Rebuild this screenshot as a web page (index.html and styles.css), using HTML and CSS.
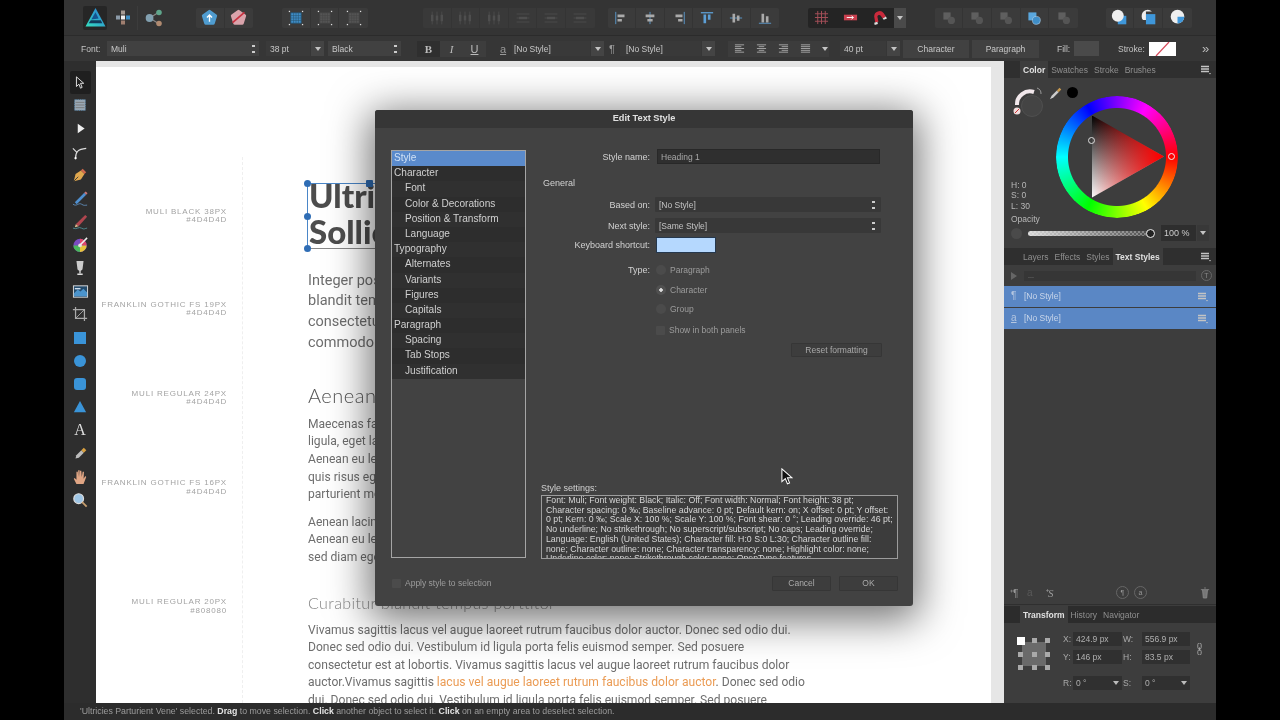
FILE: index.html
```html
<!DOCTYPE html>
<html lang="en">
<head>
<meta charset="utf-8">
<title>Edit Text Style</title>
<link rel="stylesheet" href="styles.css">
</head>
<body>
<svg class="defs" width="0" height="0">
  <defs><linearGradient id="lg" x1="0" y1="1" x2="1" y2="0"><stop offset="0" stop-color="#35e0c0"/><stop offset="1" stop-color="#2a76d6"/></linearGradient></defs>
  <symbol id="penta" viewBox="0 0 20 20"><path d="M10 3l7 5-2.700 8.500H5.700L3 8z" stroke-width="4" stroke-linejoin="round"/></symbol>
  <symbol id="sel" viewBox="0 0 20 20"><rect x="3.500" y="3.500" width="13" height="13"/><path d="M3.500 7h13M3.500 10h13M3.500 13h13M7 3.500v13M10 3.500v13M13 3.500v13" fill="none" stroke-width=".7"/><g fill="#ddd" stroke="none"><rect x="1" y="1" width="1.600" height="1.600"/><rect x="17.400" y="1" width="1.600" height="1.600"/><rect x="1" y="17.400" width="1.600" height="1.600"/><rect x="17.400" y="17.400" width="1.600" height="1.600"/></g></symbol>
  <symbol id="dist" viewBox="0 0 20 20"><path d="M4 2v16M10 2v16M16 2v16" stroke="#555" fill="none"/><rect x="2.500" y="6" width="3" height="8" fill="#555"/><rect x="8.500" y="7" width="3" height="6" fill="#555"/><rect x="14.500" y="6" width="3" height="8" fill="#555"/></symbol>
  <symbol id="disth" viewBox="0 0 20 20"><path d="M2 5h16M2 10h16M2 15h16" stroke="#555" fill="none"/><rect x="5" y="8.500" width="10" height="3" fill="#555"/></symbol>
  <symbol id="bool" viewBox="0 0 20 20"><rect x="3" y="3" width="9" height="9" fill="#5f5f5f"/><circle cx="13" cy="13" r="4.500" fill="#555"/></symbol>
  <symbol id="menu" viewBox="0 0 10 10"><path d="M0 1.500h8M0 4h8M0 6.500h8" stroke="#c4c4c4" stroke-width="1.500"/><path d="M8 8h2l-1 1.500z" fill="#c4c4c4"/></symbol>
</svg>

<div class="app">
  <header class="topbar">
    <div class="logo">
      <svg viewBox="0 0 20 20" width="21" height="21"><path d="M10 1L19.500 18.500H.5z" fill="url(#lg)"/><path d="M10 5l-4 7 7-1z" fill="#14538f"/><path d="M3.500 15.500h13l-1.500-3H5.500z" fill="#123a5a"/></svg>
    </div>
    <div class="persona">
      <svg viewBox="0 0 18 18" width="18" height="18"><rect x="2" y="6.500" width="4" height="4" fill="#8b9aa8"/><rect x="7" y="1.500" width="4" height="4" fill="#a59a92"/><rect x="7" y="6.500" width="4" height="4" fill="#eee"/><rect x="12" y="6.500" width="4" height="4" fill="#3f8fc4"/><rect x="7" y="11.500" width="4" height="4" fill="#a07f70"/></svg>
    </div>
    <div class="persona persona-last">
      <svg viewBox="0 0 18 18" width="20" height="20"><path d="M5 9l8-5M5 9l8 5" stroke="#888" fill="none"/><circle cx="5" cy="9" r="3.500" fill="#82a0b0"/><circle cx="13.500" cy="4" r="2.500" fill="#5fa58b"/><circle cx="13.500" cy="14" r="2.500" fill="#b08a70"/></svg>
    </div>
    <div class="group g1">
      <div class="c"><svg class="i-blue" width="17" height="17" viewBox="0 0 20 20"><use href="#penta"/><path d="M10 15V7M7 10l3-3 3 3" stroke="#fff" stroke-width="1.600" fill="none"/></svg></div>
      <div class="c"><svg class="i-pink" width="17" height="17" viewBox="0 0 20 20"><use href="#penta"/><path d="M3 16L17 4" stroke="#c8303f" stroke-width="2"/></svg></div>
    </div>
    <div class="group g2">
      <div class="c"><svg class="i-sel1" width="16" height="16"><use href="#sel"/></svg></div>
      <div class="c"><svg class="i-sel2" width="16" height="16"><use href="#sel"/></svg></div>
      <div class="c"><svg class="i-sel2" width="16" height="16"><use href="#sel"/></svg></div>
    </div>
    <div class="group g3">
      <div class="c"><svg width="16" height="16"><use href="#dist"/></svg></div>
      <div class="c"><svg width="16" height="16"><use href="#dist"/></svg></div>
      <div class="c"><svg width="16" height="16"><use href="#dist"/></svg></div>
      <div class="c"><svg width="16" height="16"><use href="#disth"/></svg></div>
      <div class="c"><svg width="16" height="16"><use href="#disth"/></svg></div>
      <div class="c"><svg width="16" height="16"><use href="#disth"/></svg></div>
    </div>
    <div class="group g4">
      <div class="c"><svg viewBox="0 0 16 16" width="14" height="14"><path d="M2 1v14" stroke="#5d9fd6"/><path d="M4 4h8v3H4zM4 9h5v3H4z" fill="#aaa"/></svg></div>
      <div class="c"><svg viewBox="0 0 16 16" width="14" height="14"><path d="M8 1v14" stroke="#5d9fd6"/><path d="M3 4h10v3H3zM5 9h6v3H5z" fill="#aaa"/></svg></div>
      <div class="c"><svg viewBox="0 0 16 16" width="14" height="14"><path d="M14 1v14" stroke="#5d9fd6"/><path d="M4 4h8v3H4zM7 9h5v3H7z" fill="#aaa"/></svg></div>
      <div class="c"><svg viewBox="0 0 16 16" width="14" height="14"><path d="M1 2h14" stroke="#5d9fd6" stroke-width="1.500"/><path d="M4 4h3v10H4zM9 4h3v6H9z" fill="#5d9fd6"/></svg></div>
      <div class="c"><svg viewBox="0 0 16 16" width="14" height="14"><path d="M1 8h14" stroke="#5d9fd6"/><path d="M4 3h3v10H4zM9 5h3v6H9z" fill="#aaa"/></svg></div>
      <div class="c"><svg viewBox="0 0 16 16" width="14" height="14"><path d="M1 14h14" stroke="#5d9fd6"/><path d="M4 3h3v10H4zM9 6h3v7H9z" fill="#aaa"/></svg></div>
    </div>
    <div class="group g5">
      <div class="snap">
        <div class="c"><svg viewBox="0 0 16 16" width="15" height="15"><path d="M1 4h14M1 8h14M1 12h14M4 1v14M8 1v14M12 1v14" stroke="#a8505a"/></svg></div>
        <div class="c"><svg viewBox="0 0 16 16" width="15" height="15"><rect x="1" y="5" width="14" height="6" fill="#c9404f"/><path d="M4 8h7m-2-2l2 2-2 2" stroke="#fff" fill="none"/></svg></div>
        <div class="c"><svg viewBox="0 0 16 16" width="17" height="17"><path d="M4 13L3 7a5 5 0 0 1 9-3l2 3-3 2-2-3a2 2 0 0 0-3 1l1 5z" fill="#c92a3c"/><path d="M3 13l3-1 .5 2-3 1zM11 9l3-2 1 2-3 1z" fill="#ddd"/></svg></div>
      </div>
      <div class="caret-cell"><i class="tri"></i></div>
    </div>
    <div class="group g6">
      <div class="c"><svg width="16" height="16"><use href="#bool"/></svg></div>
      <div class="c"><svg width="16" height="16"><use href="#bool"/></svg></div>
      <div class="c"><svg width="16" height="16"><use href="#bool"/></svg></div>
      <div class="c"><svg viewBox="0 0 20 20" width="16" height="16"><rect x="3" y="3" width="10" height="10" fill="#5aa7de"/><circle cx="13" cy="13" r="5" fill="#3f8ec8" stroke="#cde" stroke-width=".6"/></svg></div>
      <div class="c"><svg width="16" height="16"><use href="#bool"/></svg></div>
    </div>
    <div class="group g7">
      <div class="c"><svg viewBox="0 0 20 20" width="17" height="17"><rect x="8" y="8" width="10" height="10" fill="#3f97da"/><circle cx="8" cy="8" r="7" fill="#eee"/></svg></div>
      <div class="c"><svg viewBox="0 0 20 20" width="17" height="17"><rect x="7" y="6" width="11" height="12" fill="#3f97da"/><path d="M2 8a7 7 0 0 1 12-5H7v10H3.500A7 7 0 0 1 2 8z" fill="#eee"/></svg></div>
      <div class="c"><svg viewBox="0 0 20 20" width="17" height="17"><circle cx="10" cy="9" r="8" fill="#eee"/><path d="M10 9h8a8 8 0 0 1-8 8z" fill="#3f97da"/></svg></div>
    </div>
  </header>

  <div class="context">
    <span class="lbl lbl-font">Font:</span>
    <div class="sel sel-font"><span>Muli</span><i class="updown"></i></div>
    <div class="inp inp-pt">38 pt</div><div class="drop"><i class="tri"></i></div>
    <div class="sel sel-weight"><span>Black</span><i class="updown"></i></div>
    <div class="biu"><b>B</b><em>I</em><u>U</u></div>
    <span class="glyph glyph-a">a</span>
    <div class="sel sel-style"><span>[No Style]</span></div><div class="drop"><i class="tri"></i></div>
    <span class="glyph glyph-p">¶</span>
    <div class="sel sel-style2"><span>[No Style]</span></div><div class="drop"><i class="tri"></i></div>
    <div class="aligns">
      <svg viewBox="0 0 12 12" width="11" height="11"><path d="M1 2h10M1 4h7M1 6h10M1 8h7M1 10h10" stroke="#a8a8a8"/></svg>
      <svg viewBox="0 0 12 12" width="11" height="11"><path d="M1 2h10M3 4h6M1 6h10M3 8h6M1 10h10" stroke="#a8a8a8"/></svg>
      <svg viewBox="0 0 12 12" width="11" height="11"><path d="M1 2h10M4 4h7M1 6h10M4 8h7M1 10h10" stroke="#a8a8a8"/></svg>
      <svg viewBox="0 0 12 12" width="11" height="11"><path d="M1 2h10M1 4h10M1 6h10M1 8h10M1 10h10" stroke="#a8a8a8"/></svg>
      <i class="tri"></i>
    </div>
    <div class="inp inp-lead">40 pt</div><div class="drop"><i class="tri"></i></div>
    <div class="btn btn-char">Character</div>
    <div class="btn btn-para">Paragraph</div>
    <span class="lbl lbl-fill">Fill:</span>
    <div class="fill"></div>
    <span class="lbl lbl-stroke">Stroke:</span>
    <div class="stroke"><svg viewBox="0 0 27 14" width="27" height="14"><path d="M7 14L20 0" stroke="#d6495a" stroke-width="1.200"/></svg></div>
    <span class="more">»</span>
  </div>

  <div class="work">
    <nav class="tools">
      <div class="tool tool-on"><svg viewBox="0 0 16 16" width="13" height="13"><path d="M3 1l9 8H8l2 5-2 1-2-5-3 3z" fill="none" stroke="#ddd" stroke-width="1.200"/></svg></div>
      <div class="tool"><svg viewBox="0 0 18 18" width="16" height="16"><rect x="3" y="3" width="12" height="12" fill="#9aa8b4" stroke="#5d8fb8" stroke-dasharray="1 1"/><path d="M4 6h10M4 9h10M4 12h10" stroke="#777"/></svg></div>
      <div class="tool"><svg viewBox="0 0 16 16" width="11" height="11"><path d="M4 1l10 7-10 7z" fill="#eee"/></svg></div>
      <div class="tool"><svg viewBox="0 0 18 18" width="16" height="16"><path d="M4 16c0-7 2-10 12-11M1 5l5 5" stroke="#ddd" fill="none" stroke-width="1.300"/><circle cx="4" cy="16" r="1.300" fill="#fff"/></svg></div>
      <div class="tool"><svg viewBox="0 0 18 18" width="16" height="16"><path d="M2 16l2-8 6-4 4 4-4 6z" fill="#e0a84f"/><path d="M10 4l2-2 4 4-2 2z" fill="#d36a4d"/><path d="M2 16l5-5" stroke="#333"/></svg></div>
      <div class="tool"><svg viewBox="0 0 18 18" width="17" height="17"><path d="M3 13L13 3l2 2L5 15z" fill="#4f8fd0"/><path d="M13 3l2 2 1.500-1.500-2-2z" fill="#c77"/><path d="M1 15c4 3 6-2 9 0s4 1 6 1" stroke="#5d89b5" fill="none"/></svg></div>
      <div class="tool"><svg viewBox="0 0 18 18" width="17" height="17"><path d="M4 12L14 2l2 2L7 14z" fill="#b0464f"/><path d="M4 12l3 2-4 1z" fill="#e0c090"/><path d="M1 16c4 2 6-2 9 0s4 0 6 0" stroke="#4f8a92" fill="none"/></svg></div>
      <div class="tool"><svg viewBox="0 0 18 18" width="17" height="17"><circle cx="8.500" cy="10" r="7" fill="#7a4bc0"/><path d="M8.500 10V3a7 7 0 0 1 7 7z" fill="#e0476a"/><path d="M8.500 10h7a7 7 0 0 1-7 7z" fill="#e7c53c"/><path d="M8.500 10v7a7 7 0 0 1-7-7z" fill="#49b85a"/><circle cx="8.500" cy="10" r="2" fill="#ddd"/><path d="M8 10l8-8" stroke="#eee" stroke-width="1.600"/></svg></div>
      <div class="tool"><svg viewBox="0 0 18 18" width="16" height="16"><path d="M5 1h8l-1 8a3 3 0 0 1-6 0z" fill="#ccc"/><path d="M9 11v4M6 16h6" stroke="#ddd" stroke-width="1.500"/></svg></div>
      <div class="tool"><svg viewBox="0 0 18 18" width="17" height="17"><rect x="1.500" y="3" width="15" height="12" fill="#234a6b" stroke="#ddd"/><path d="M2 11l4-4 3 2 3-3 4 4v4H2z" fill="#4b94cc"/><path d="M3 6h6" stroke="#cde" stroke-width="1.500"/></svg></div>
      <div class="tool"><svg viewBox="0 0 18 18" width="16" height="16"><path d="M4 1v13h13M1 4h13v13" stroke="#aaa" fill="none" stroke-width="1.400"/><path d="M4 14L14 4" stroke="#aaa"/></svg></div>
      <div class="tool"><i class="shape shape-sq"></i></div>
      <div class="tool"><i class="shape shape-ci"></i></div>
      <div class="tool"><i class="shape shape-rd"></i></div>
      <div class="tool"><svg viewBox="0 0 16 16" width="14" height="14"><path d="M8 1l7 13H1z" fill="#3a94d8"/></svg></div>
      <div class="tool tool-a">A</div>
      <div class="tool"><svg viewBox="0 0 18 18" width="15" height="15"><path d="M3 15l1-4 6-6 3 3-6 6z" fill="#bbb"/><path d="M10 5l3-3 3 3-3 3z" fill="#d8a040"/></svg></div>
      <div class="tool"><svg viewBox="0 0 18 18" width="16" height="16"><path d="M5 17l-3-6 1-1 2 2V3h1.500l.5 6V1.500h1.500L9 9V2h1.500l.5 7 1-6h1.500l-.5 8 2-3 1 1-3 8z" fill="#e0a584"/></svg></div>
      <div class="tool"><svg viewBox="0 0 18 18" width="16" height="16"><circle cx="7.500" cy="7.500" r="5.500" fill="#9fc6e6" stroke="#ddd" stroke-width="1.300"/><path d="M11.500 11.500l5 5" stroke="#c9a070" stroke-width="2"/></svg></div>
    </nav>

    <main class="viewport">
      <div class="page">
        <aside class="notes">
          <p class="note n1">MULI BLACK 38PX<br>#4D4D4D</p>
          <p class="note n2">FRANKLIN GOTHIC FS 19PX<br>#4D4D4D</p>
          <p class="note n3">MULI REGULAR 24PX<br>#4D4D4D</p>
          <p class="note n4">FRANKLIN GOTHIC FS 16PX<br>#4D4D4D</p>
          <p class="note n5">MULI REGULAR 20PX<br>#808080</p>
        </aside>
        <article class="copy">
          <div class="selected">
            <h1>Ultric<br>Sollic</h1>
            <i class="hd hd-tl"></i><i class="hd hd-ml"></i><i class="hd hd-bl"></i><i class="hd hd-tm"></i>
          </div>
          <p class="lead">Integer posu<br>blandit temp<br>consectetur<br>commodo cur</p>
          <h2>Aenean</h2>
          <p class="txt">Maecenas fau<br>ligula, eget lac<br>Aenean eu leo<br>quis risus eget<br>parturient mon</p>
          <p class="txt txt-2">Aenean lacinia<br>Aenean eu leo<br>sed diam eget</p>
          <h3>Curabitur blandit tempus porttitor</h3>
          <p class="txt txt-3">Vivamus sagittis lacus vel augue laoreet rutrum faucibus dolor auctor. Donec sed odio dui.<br>Donec sed odio dui. Vestibulum id ligula porta felis euismod semper. Sed posuere<br>consectetur est at lobortis. Vivamus sagittis lacus vel augue laoreet rutrum faucibus dolor<br>auctor.Vivamus sagittis <span class="orange">lacus vel augue laoreet rutrum faucibus dolor auctor</span>. Donec sed odio<br>dui. Donec sed odio dui. Vestibulum id ligula porta felis euismod semper. Sed posuere</p>
        </article>
      </div>
    </main>

    <aside class="side">
      <section class="color">
        <div class="tabs">
          <span class="grip"></span><span class="tab tab-on">Color</span><span class="tab">Swatches</span><span class="tab">Stroke</span><span class="tab">Brushes</span>
          <svg class="menu" width="10" height="10"><use href="#menu"/></svg>
        </div>
        <div class="wheel-row">
          <div class="hsl-col">
            <div class="pickers">
              <svg viewBox="0 0 34 34" width="34" height="34"><circle cx="21" cy="21" r="10.500" fill="#444" stroke="#4f4f4f"/><path d="M6 20a13 13 0 0 1 17-13" fill="none" stroke="#f2e8ec" stroke-width="4"/><circle cx="6" cy="26" r="3.500" fill="#f3dede"/><path d="M4 28l4-4" stroke="#c33"/><path d="M26 3a6 6 0 0 1 4 6" stroke="#999" fill="none"/></svg>
              <svg class="dropper" viewBox="0 0 16 16" width="14" height="14"><path d="M1 15l2-4 6-6 2 2-6 6z" fill="#ccc"/><path d="M9 5l3-3 2 2-3 3z" fill="#c89a50"/></svg>
              <i class="black"></i>
            </div>
            <div class="hsl">H: 0<br>S: 0<br>L: 30</div>
          </div>
          <div class="wheel">
            <div class="ring"></div>
            <div class="tri-color"></div>
            <i class="mark mark-ring"></i><i class="mark mark-tri"></i>
          </div>
        </div>
        <div class="op-label">Opacity</div>
        <div class="opacity">
          <i class="op-dot"></i>
          <div class="op-slide"><i class="op-knob"></i></div>
          <div class="op-val">100 %</div><div class="op-drop"><i class="tri"></i></div>
        </div>
      </section>
      <section class="styles">
        <div class="tabs">
          <span class="grip"></span><span class="tab">Layers</span><span class="tab">Effects</span><span class="tab">Styles</span><span class="tab tab-on">Text Styles</span>
          <svg class="menu" width="10" height="10"><use href="#menu"/></svg>
        </div>
        <div class="filter"><i class="play"></i><div class="field">...</div><span class="tcirc">T</span></div>
        <div class="row-blue"><span class="pil">¶</span><span>[No Style]</span><svg class="menu" width="10" height="10"><use href="#menu"/></svg></div>
        <div class="row-blue"><span class="pil pil-a">a</span><span>[No Style]</span><svg class="menu" width="10" height="10"><use href="#menu"/></svg></div>
        <div class="spring"></div>
        <div class="style-foot">
          <span class="foot-i">⁺¶</span><span class="foot-i foot-dim">a</span><span class="foot-i foot-s">⁺S</span>
          <span class="foot-c foot-c1">¶</span><span class="foot-c">a</span>
          <svg class="trash" viewBox="0 0 12 14" width="10" height="12"><path d="M1 3h10M3 3l1 10h4l1-10M5 1h2" stroke="#8a8a8a" fill="#777"/></svg>
        </div>
      </section>
      <section class="transform">
        <div class="tabs tabs-t">
          <span class="grip"></span><span class="tab tab-on">Transform</span><span class="tab">History</span><span class="tab">Navigator</span>
        </div>
        <div class="tf-body">
          <div class="anchor">
            <i class="on"></i><i></i><i></i><i></i><i></i><i></i><i></i><i></i><i></i>
          </div>
          <div class="tf-grid">
            <label>X:</label><div class="tf">424.9 px</div><label>W:</label><div class="tf">556.9 px</div>
            <label>Y:</label><div class="tf">146 px</div><label>H:</label><div class="tf">83.5 px</div>
            <label class="tf-gap">R:</label><div class="tf tf-gap">0 °<i class="tri"></i></div><label class="tf-gap">S:</label><div class="tf tf-gap">0 °<i class="tri"></i></div>
          </div>
          <svg class="chain" viewBox="0 0 8 14" width="7" height="12"><path d="M4 0a2 2 0 0 1 2 2v3a2 2 0 0 1-4 0V2a2 2 0 0 1 2-2zM4 8a2 2 0 0 1 2 2v2a2 2 0 0 1-4 0v-2a2 2 0 0 1 2-2zM4 5v4" stroke="#aaa" fill="none"/></svg>
        </div>
      </section>
    </aside>
  </div>

  <footer class="status">'Ultricies Parturient Vene' selected. <b>Drag</b> to move selection. <b>Click</b> another object to select it. <b>Click</b> on an empty area to deselect selection.</footer>

  <div class="dialog">
    <div class="d-title">Edit Text Style</div>
    <div class="d-main">
      <ul class="d-list">
        <li class="on">Style</li>
        <li>Character</li>
        <li class="sub">Font</li>
        <li class="sub">Color &amp; Decorations</li>
        <li class="sub">Position &amp; Transform</li>
        <li class="sub">Language</li>
        <li>Typography</li>
        <li class="sub">Alternates</li>
        <li class="sub">Variants</li>
        <li class="sub">Figures</li>
        <li class="sub">Capitals</li>
        <li>Paragraph</li>
        <li class="sub">Spacing</li>
        <li class="sub">Tab Stops</li>
        <li class="sub">Justification</li>
      </ul>
      <div class="d-form">
        <div class="f-row f-name"><label>Style name:</label><div class="f-input">Heading 1</div></div>
        <div class="f-general">General</div>
        <div class="f-row f-based"><label>Based on:</label><div class="f-sel">[No Style]<i class="updown"></i></div></div>
        <div class="f-row f-next"><label>Next style:</label><div class="f-sel">[Same Style]<i class="updown"></i></div></div>
        <div class="f-row f-key"><label>Keyboard shortcut:</label><div class="f-short"></div></div>
        <div class="f-row f-type"><label>Type:</label><div class="f-radio"><i class="radio"></i>Paragraph</div></div>
        <div class="f-row f-opt"><label></label><div class="f-radio"><i class="radio radio-on"></i>Character</div></div>
        <div class="f-row f-opt"><label></label><div class="f-radio"><i class="radio"></i>Group</div></div>
        <div class="f-row f-both"><label></label><div class="f-radio"><i class="check"></i>Show in both panels</div></div>
        <div class="f-reset"><div class="d-btn d-btn-reset">Reset formatting</div></div>
        <div class="f-settings">Style settings:</div>
        <div class="f-box">Font: Muli; Font weight: Black; Italic: Off; Font width: Normal; Font height: 38 pt;<br>Character spacing: 0 ‰; Baseline advance: 0 pt; Default kern: on; X offset: 0 pt; Y offset:<br>0 pt; Kern: 0 ‰; Scale X: 100 %; Scale Y: 100 %; Font shear: 0 °; Leading override: 46 pt;<br>No underline; No strikethrough; No superscript/subscript; No caps; Leading override;<br>Language: English (United States); Character fill: H:0 S:0 L:30; Character outline fill:<br>none; Character outline: none; Character transparency: none; Highlight color: none;<br>Underline color: none; Strikethrough color: none; OpenType features</div>
      </div>
    </div>
    <div class="d-foot">
      <div class="d-apply"><i class="check"></i>Apply style to selection</div>
      <div class="d-btn d-cancel">Cancel</div>
      <div class="d-btn d-ok">OK</div>
    </div>
  </div>

  <svg class="cursor" viewBox="0 0 14 20" width="12" height="17"><path d="M1 1v15l4-3.500 2.500 6 2.500-1-2.500-6H13z" fill="#111" stroke="#fff" stroke-width="1.200"/></svg>
</div>
</body>
</html>
```

FILE: styles.css
```css
* { box-sizing: border-box; }
html, body { margin: 0; height: 100%; background: #000; overflow: hidden; }
body { font: 9px "Liberation Sans", Arial, sans-serif; color: #c8c8c8; }
.defs { position: absolute; }
p, h1, h2, h3, ul { margin: 0; padding: 0; }
i { display: block; font-style: normal; }

.app { position: relative; width: 1152px; height: 720px; margin-left: 64px; display: flex; flex-direction: column; background: #333; overflow: hidden; filter: blur(.3px); }

/* top toolbar */
.topbar { height: 36px; flex: none; display: flex; align-items: center; background: #343434; border-bottom: 1px solid #2b2b2b; }
.logo { width: 24px; height: 24px; margin-left: 19px; background: #262626; border-radius: 2px; display: flex; align-items: center; justify-content: center; }
.persona { width: 30px; height: 24px; margin-left: 1px; display: flex; align-items: center; justify-content: center; border-right: 1px solid #3c3c3c; }
.persona-last { border-right: 0; }
.group { height: 20px; display: flex; background: #3b3b3b; border-radius: 2px; }
.g1 { margin-left: 27px; }
.g2 { margin-left: 29px; }
.g3 { margin-left: 55px; opacity: .8; }
.g4 { margin-left: 13px; }
.g5 { margin-left: 29px; }
.g6 { margin-left: 29px; }
.g7 { margin-left: 28px; }
.c { width: 28.6px; display: flex; align-items: center; justify-content: center; border-right: 1px solid #343434; }
.c:last-child { border-right: 0; }
.snap { display: flex; background: #242424; border-radius: 2px 0 0 2px; }
.snap .c { border-color: #242424; }
.caret-cell { width: 12px; display: flex; align-items: center; justify-content: center; background: #4a4a4a; }
.i-blue { fill: #4f9cd0; stroke: #4f9cd0; }
.i-pink { fill: #d9a3ab; stroke: #d9a3ab; }
.i-sel1 { fill: #3f8ec8; stroke: #27526f; }
.i-sel2 { fill: #555; stroke: #444; }
.tri { width: 0; height: 0; border-left: 3px solid transparent; border-right: 3px solid transparent; border-top: 4px solid #c4c4c4; }

/* context toolbar */
.context { height: 25px; flex: none; display: flex; align-items: center; padding-left: 17px; background: #363636; font-size: 8.5px; color: #c4c4c4; }
.lbl-font { width: 26px; }
.sel, .inp { height: 15px; background: #414141; display: flex; align-items: center; justify-content: space-between; padding: 0 4px; color: #c8c8c8; }
.sel-font { width: 152px; }
.inp-pt { width: 44px; margin-left: 7px; background: #3a3a3a; }
.drop { width: 13px; height: 15px; margin-left: 1px; background: #444; display: flex; align-items: center; justify-content: center; }
.sel-weight { width: 73px; margin-left: 4px; }
.updown { width: 3px; height: 10px; background: radial-gradient(circle at 1.500px 2px, #ccc 1.400px, transparent 1.500px), radial-gradient(circle at 1.500px 8px, #ccc 1.400px, transparent 1.500px); }
.biu { width: 69px; height: 16px; margin-left: 16px; display: flex; background: #3d3d3d; }
.biu > * { flex: 1; text-align: center; line-height: 16px; font-size: 11px; color: #bbb; text-decoration: none; }
.biu b { font-family: "Liberation Serif", serif; background: #2f2f2f; }
.biu em { font-family: "Liberation Serif", serif; }
.biu u { text-decoration: underline; }
.glyph { font-size: 11px; color: #999; text-decoration: underline; }
.glyph-a { margin-left: 14px; width: 12px; }
.sel-style { width: 78px; padding-left: 2px; background: #393939; }
.glyph-p { margin-left: 5px; width: 11px; text-decoration: none; }
.sel-style2 { width: 81px; padding-left: 6px; background: #393939; }
.aligns { width: 101px; height: 16px; margin-left: 13px; display: flex; align-items: center; gap: 11px; padding-left: 6px; background: #3c3c3c; }
.inp-lead { width: 46px; margin-left: 11px; background: #3a3a3a; }
.btn { height: 18px; background: #414141; display: flex; align-items: center; justify-content: center; color: #c8c8c8; }
.btn-char { width: 66px; margin-left: 3px; }
.btn-para { width: 67px; margin-left: 3px; }
.lbl-fill { margin-left: 18px; width: 17px; }
.fill { width: 25px; height: 15px; background: #4a4a4a; }
.lbl-stroke { margin-left: 19px; width: 31px; }
.stroke { width: 27px; height: 14px; background: #fff; }
.more { margin-left: 26px; font-size: 13px; color: #bbb; }

/* workspace */
.work { flex: 1; min-height: 0; display: flex; }
.tools { width: 32px; flex: none; background: #2e2e2e; display: flex; flex-direction: column; align-items: center; padding-top: 9.500px; }
.tool { width: 21px; height: 23.220px; flex: none; display: flex; align-items: center; justify-content: center; }
.tool-on { background: #1f1f1f; border-radius: 2px; }
.tool-a { font: 16px "Liberation Serif", serif; color: #ddd; }
.shape { width: 12px; height: 12px; background: #3a94d8; }
.shape-ci { border-radius: 50%; }
.shape-rd { border-radius: 3px; }

/* document */
.viewport { flex: 1; min-width: 0; background: #e6e6e6; padding-top: 6px; overflow: hidden; }
.page { width: 895px; height: 100%; background: #fff; display: flex; overflow: hidden; }
.notes { width: 147px; flex: none; margin-top: 90px; padding-right: 15px; border-right: 1px dashed #efefef; font-size: 8px; line-height: 8.400px; letter-spacing: .8px; text-align: right; color: #a3a3a3; }
.n1 { margin-top: 51px; }
.n2 { margin-top: 76px; }
.n3 { margin-top: 72px; }
.n4 { margin-top: 73px; }
.n5 { margin-top: 102px; }
.copy { margin-left: 65px; padding-top: 116px; white-space: nowrap; color: #6e6e6e; font-family: Roboto, sans-serif; }
.selected { position: relative; height: 66px; padding-left: 1px; border-left: 1px solid #4a86c8; border-top: 1px solid #4a86c8; border-bottom: 1px solid #888; width: 557px; margin-left: -1px; }
h1 { margin-top: -6px; font: 900 33px/35.500px Lato, sans-serif; color: #4d4d4d; }
.hd { position: absolute; width: 7px; height: 7px; border-radius: 50%; background: #2f6db5; }
.hd-tl { left: -4px; top: -4px; }
.hd-ml { left: -4px; top: 29px; }
.hd-bl { left: -4px; bottom: -4px; }
.hd-tm { left: 58px; top: -4px; border-radius: 1px; }
.lead { margin-top: 21.500px; font-size: 14.500px; line-height: 20.700px; }
h2 { margin-top: 29.500px; font: 300 20px/24px Lato, sans-serif; color: #555; letter-spacing: .5px; }
.txt { font-size: 12.080px; line-height: 17.600px; }
h2 + .txt { margin-top: 9px; }
.txt-2 { margin-top: 10px; }
h3 { margin-top: 26px; font: 300 16px/20px Lato, sans-serif; color: #868686; letter-spacing: .4px; }
.txt-3 { margin-top: 9px; }
.orange { color: #eb9c55; }

/* side panels */
.side { width: 212px; flex: none; display: flex; flex-direction: column; background: #3d3d3d; }
.tabs { height: 17px; flex: none; display: flex; align-items: stretch; background: #2f2f2f; padding-left: 5px; position: relative; font-size: 8.500px; color: #8f8f8f; }
.grip { width: 11px; }
.tab { padding: 0 3px; display: flex; align-items: center; }
.tab-on { background: #3d3d3d; color: #e0e0e0; font-weight: bold; }
.menu { position: absolute; right: 5px; top: 50%; margin-top: -5px; }
.color { height: 187px; flex: none; }
.wheel-row { display: flex; padding: 17.500px 0 0 7px; height: 141px; }
.hsl-col { width: 45px; flex: none; display: flex; flex-direction: column; justify-content: space-between; }
.pickers { width: 70px; display: flex; margin-top: -11px; }
.dropper { margin: 1px 0 0 4px; }
.black { width: 11px; height: 11px; margin: 2px 0 0 4px; background: #000; border-radius: 50%; }
.hsl { font-size: 8.500px; line-height: 10.500px; color: #b8b8b8; padding-bottom: 8px; }
.wheel { position: relative; width: 122px; height: 122px; flex: none; }
.ring { width: 122px; height: 122px; border-radius: 50%; background: conic-gradient(from 30deg, #f0f, #f00 60deg, #ff0 120deg, #0f0 180deg, #0ff 240deg, #00f 300deg, #f0f 360deg); -webkit-mask: radial-gradient(circle, transparent 48.500px, #000 49.500px); mask: radial-gradient(circle, transparent 48.500px, #000 49.500px); }
.tri-color { position: absolute; left: 36px; top: 20px; width: 72px; height: 82px; clip-path: polygon(0 0, 100% 50%, 0 100%); background: linear-gradient(to left, #f00 4%, rgba(255,0,0,0) 100%), linear-gradient(to bottom, #000, #fff); }
.mark { position: absolute; width: 7px; height: 7px; border: 1px solid #eee; border-radius: 50%; }
.mark-ring { left: 112px; top: 57px; }
.mark-tri { left: 32px; top: 41px; border-color: #ddd; }
.op-label { padding-left: 7px; font-size: 8.500px; line-height: 10px; color: #b8b8b8; margin-top: -5px; }
.opacity { display: flex; align-items: center; margin-top: 1px; height: 16px; padding-left: 7px; }
.op-dot { width: 11px; height: 11px; background: #4a4a4a; border-radius: 50%; }
.op-slide { position: relative; width: 122px; height: 5px; margin-left: 6px; border-radius: 3px; background: linear-gradient(to right, rgba(225,225,225,.9), rgba(70,70,70,.5)), repeating-conic-gradient(#bbb 0 25%, #555 0 50%) 0 0 / 4px 4px; }
.op-knob { position: absolute; right: -5px; top: -2px; width: 9px; height: 9px; border: 1.500px solid #eee; border-radius: 50%; background: #222; }
.op-val { width: 35px; height: 16px; margin-left: 11px; padding-left: 3px; line-height: 16px; background: #2e2e2e; color: #ccc; }
.op-drop { width: 12px; height: 16px; margin-left: 1px; background: #383838; display: flex; align-items: center; justify-content: center; }
.styles { flex: 1; min-height: 0; display: flex; flex-direction: column; }
.filter { height: 21px; flex: none; display: flex; align-items: center; padding-left: 7px; }
.play { width: 0; height: 0; border-left: 6px solid #666; border-top: 4px solid transparent; border-bottom: 4px solid transparent; }
.field { width: 172px; height: 10px; margin-left: 7px; padding-left: 4px; line-height: 10px; background: #363636; font-size: 7px; color: #888; }
.tcirc { width: 11px; height: 11px; margin-left: 5px; border: 1px solid #666; border-radius: 50%; font-size: 7px; line-height: 9px; text-align: center; color: #888; }
.row-blue { position: relative; height: 21px; flex: none; margin-bottom: 1px; padding: 0 0 2px 7px; display: flex; align-items: center; background: #5a87c5; color: #c9d6ea; font-size: 8.500px; }
.row-blue .menu { right: 8px; }
.pil { width: 13px; color: #b4c6e0; font-size: 10px; }
.pil-a { text-decoration: underline; }
.spring { flex: 1; }
.style-foot { height: 20px; flex: none; display: flex; align-items: center; padding: 0 0 4px 6px; border-bottom: 1px solid #2f2f2f; position: relative; color: #999; font-size: 10px; }
.foot-i { width: 17px; }
.foot-dim { color: #5a5a5a; }
.foot-s { font: italic 11px "Liberation Serif", serif; }
.foot-c { width: 13px; height: 13px; margin-left: 5px; border: 1px solid #666; border-radius: 50%; font-size: 7px; line-height: 11px; text-align: center; }
.foot-c1 { margin-left: 55px; }
.trash { position: absolute; right: 6px; top: 2px; }
.transform { height: 98px; flex: none; }
.tabs-t { height: 17px; margin-top: 1px; background: #2c2c2c; }
.tf-body { position: relative; display: flex; padding: 9px 0 0 14px; }
.anchor { width: 32px; height: 32px; margin-top: 6px; display: grid; grid-template-columns: repeat(3, 5px); grid-template-rows: repeat(3, 5px); justify-content: space-between; align-content: space-between; background: linear-gradient(#6a6a6a, #6a6a6a) center / 24px 24px no-repeat; }
.anchor i { background: #aaa; }
.anchor .on { background: #fff; width: 8px; height: 8px; margin: -1px; }
.tf-grid { margin-left: 13px; display: grid; grid-template-columns: 9px 49px 18px 48px; grid-template-rows: 14px 15px 23px; row-gap: 3px; align-items: center; column-gap: 1px; font-size: 8.500px; color: #aaa; }
.tf { height: 14px; padding-left: 3px; line-height: 14px; background: #303030; position: relative; color: #b0b0b0; }
.tf .tri { position: absolute; right: 3px; top: 5px; border-top-color: #bbb; }
.tf-gap { align-self: end; }
label.tf-gap { line-height: 14px; }
.chain { position: absolute; left: 192px; top: 20px; }

.status { height: 17px; flex: none; padding: 0 0 1px 16px; background: #2c2c2c; line-height: 17px; font-size: 8.780px; color: #9c9c9c; white-space: nowrap; }
.status b { color: #e4e4e4; }

/* dialog */
.dialog { position: absolute; left: 311px; top: 110px; width: 538px; height: 496px; display: flex; flex-direction: column; background: #424242; border-radius: 3px; box-shadow: 0 8px 40px 6px rgba(0,0,0,.55); }
.d-title { height: 18px; flex: none; background: #363636; border-radius: 3px 3px 0 0; text-align: center; line-height: 17px; font-size: 9.200px; font-weight: bold; color: #e0e0e0; }
.d-main { flex: 1; min-height: 0; display: flex; padding: 22px 15px 0 16px; }
.d-list { width: 135px; height: 408px; flex: none; list-style: none; border: 1px solid #a5a5a5; font-size: 10.100px; }
.d-list li { height: 15.200px; padding-left: 2px; line-height: 14.600px; background: #303030; color: #d0d0d0; white-space: nowrap; }
.d-list li:nth-child(even) { background: #2d2d2d; }
.d-list li.on { background: #5a8acb; color: #cfe0f5; }
.d-list li.sub { padding-left: 13px; }
.d-form { flex: 1; min-width: 0; margin: -1px 0 0 15px; font-size: 8.500px; color: #bdbdbd; }
.f-row { display: flex; align-items: center; }
.f-row label { width: 109px; flex: none; text-align: right; font-size: 9px; color: #d2d2d2; }
.f-input { width: 223px; height: 15px; margin-left: 7px; padding-left: 3px; line-height: 15px; background: #2f2f2f; border: 1px solid #282828; color: #a8a8a8; }
.f-general { margin-top: 14px; padding-left: 2px; font-size: 9px; color: #d2d2d2; line-height: 10px; }
.f-based { margin-top: 9px; }
.f-next { margin-top: 6px; }
.f-sel { width: 226px; height: 15px; margin-left: 5px; padding: 0 6px 0 4px; display: flex; align-items: center; justify-content: space-between; background: #383838; color: #c4c4c4; border-radius: 1px; }
.f-key { margin-top: 4px; }
.f-short { width: 60px; height: 16px; margin-left: 6px; background: #b5d8fe; border: 1px solid #25384e; }
.f-type { margin-top: 12px; align-items: flex-start; }
.f-radio { display: flex; align-items: center; margin-left: 6px; color: #9c9c9c; }
.radio { width: 10px; height: 10px; margin-right: 4px; border-radius: 50%; background: #4b4b4b; }
.radio-on { background: radial-gradient(circle, #ddd 1.500px, #505050 2px); }
.f-opt { margin-top: 9.500px; }
.check { width: 9px; height: 9px; margin-right: 4px; background: #4b4b4b; border-radius: 1px; }
.f-both { margin-top: 11px; }
.f-reset { display: flex; justify-content: flex-end; padding-right: 16px; margin-top: 8px; }
.d-btn { display: flex; align-items: center; justify-content: center; background: #3d3d3d; border: 1px solid #363636; border-radius: 1px; color: #aaa; }
.d-btn-reset { width: 91px; height: 14px; }
.f-settings { margin-top: 126px; line-height: 10px; font-size: 9px; color: #d0d0d0; }
.f-box { height: 64px; width: 357px; margin-top: 2px; padding: 0 4px; overflow: hidden; border: 1px solid #9c9c9c; background: #3c3c3c; font-size: 8.750px; line-height: 9.700px; color: #d6d6d6; white-space: nowrap; }
.d-foot { height: 48px; flex: none; display: flex; align-items: center; padding: 2px 15px 0 16px; font-size: 8.500px; }
.d-apply { display: flex; align-items: center; flex: 1; padding-left: 1px; color: #9c9c9c; }
.d-cancel, .d-ok { width: 59px; height: 15px; }
.d-ok { margin-left: 8px; }
.cursor { position: absolute; left: 717px; top: 468px; }
```
